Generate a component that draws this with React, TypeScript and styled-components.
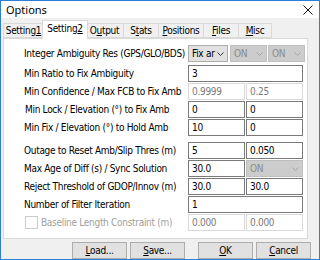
import React from "react";
import styled, { createGlobalStyle } from "styled-components";

const GlobalStyle = createGlobalStyle`
  html, body {
    margin: 0;
    padding: 0;
    background: #ffffff;
  }
  body {
    font-family: "DejaVu Sans Condensed", "Liberation Sans", sans-serif;
    font-size: 10px;
    letter-spacing: -0.3px;
    color: #000000;
  }
`;

const Window = styled.div`
  width: 320px;
  height: 260px;
  box-sizing: border-box;
  border: 1px solid #2b7fd6;
  background: #f0f0f0;
  display: flex;
  flex-direction: column;
  overflow: hidden;
`;

const TitleBar = styled.div`
  height: 19px;
  background: #ffffff;
  display: flex;
  align-items: center;
  justify-content: space-between;
  padding: 0 6px 0 5px;
  font-family: "Noto Sans", "Open Sans", sans-serif;
  font-size: 11px;
  letter-spacing: 0;
`;

const Close = styled.svg`
  width: 10px;
  height: 10px;
`;

const Client = styled.div`
  flex: 1;
  display: flex;
  flex-direction: column;
  padding: 1px 2px 0 2px;
  background: #f0f0f0;
`;

const TabStrip = styled.div`
  display: flex;
  align-items: flex-end;
  height: 19px;
  position: relative;
  z-index: 1;
`;

const Tab = styled.div<{ $active?: boolean; $w: number }>`
  box-sizing: border-box;
  width: ${(p) => p.$w}px;
  height: ${(p) => (p.$active ? 19 : 15)}px;
  margin: 0 ${(p) => (p.$active ? -2 : 0)}px;
  margin-bottom: ${(p) => (p.$active ? -1 : 0)}px;
  border: 1px solid #d9d9d9;
  border-left-width: ${(p) => (p.$active ? 1 : 0)}px;
  border-bottom: ${(p) => (p.$active ? "none" : "1px solid #d9d9d9")};
  background: ${(p) => (p.$active ? "#ffffff" : "#f0f0f0")};
  display: flex;
  align-items: ${(p) => (p.$active ? "flex-start" : "center")};
  padding-top: ${(p) => (p.$active ? 2 : 0)}px;
  justify-content: center;
  white-space: nowrap;
  position: relative;
  z-index: ${(p) => (p.$active ? 2 : 1)};
  &:first-child {
    border-left-width: 1px;
    margin-left: 0;
  }
`;

const Key = styled.span`
  text-decoration: underline;
  text-underline-offset: 1px;
`;

const Panel = styled.div`
  box-sizing: border-box;
  width: 305px;
  height: 201px;
  background: #ffffff;
  border: 1px solid #d9d9d9;
  padding: 6px 0 0 20px;
  display: flex;
  flex-direction: column;
`;

const Section = styled.div<{ $gap?: number }>`
  display: flex;
  flex-direction: column;
  gap: 1px;
  margin-top: ${(p) => p.$gap ?? 0}px;
`;

const Row = styled.div`
  display: flex;
  align-items: center;
  height: 17px;
`;

const Label = styled.div<{ $dim?: boolean; $indent?: number }>`
  width: 164px;
  flex-shrink: 0;
  padding-left: ${(p) => p.$indent ?? 0}px;
  box-sizing: border-box;
  white-space: nowrap;
  color: ${(p) => (p.$dim ? "#a0a0a0" : "#000000")};
  display: flex;
  align-items: center;
  gap: 3px;
`;

const Fields = styled.div`
  display: flex;
  gap: 1px;
  height: 100%;
`;

const Input = styled.div<{ $w: number; $dim?: boolean }>`
  box-sizing: border-box;
  width: ${(p) => p.$w}px;
  height: 100%;
  border: 1px solid ${(p) => (p.$dim ? "#d9d9d9" : "#7a7a7a")};
  background: #ffffff;
  color: ${(p) => (p.$dim ? "#7a7a7a" : "#000000")};
  padding-left: 3px;
  display: flex;
  align-items: center;
  white-space: nowrap;
`;

const Combo = styled.div<{ $w: number; $dim?: boolean }>`
  box-sizing: border-box;
  width: ${(p) => p.$w}px;
  height: 100%;
  border: 1px solid ${(p) => (p.$dim ? "#bfbfbf" : "#adadad")};
  background: ${(p) => (p.$dim ? "#cccccc" : "#e1e1e1")};
  color: ${(p) => (p.$dim ? "#8a8a8a" : "#000000")};
  padding: 0 3px;
  display: flex;
  align-items: center;
  justify-content: space-between;
  white-space: nowrap;
`;

const Chevron = styled.svg<{ $dim?: boolean }>`
  width: 7px;
  height: 4px;
  flex-shrink: 0;
  stroke: ${(p) => (p.$dim ? "#a6a6a6" : "#333333")};
`;

const Check = styled.span`
  display: inline-block;
  box-sizing: border-box;
  width: 13px;
  height: 13px;
  flex-shrink: 0;
  border: 1px solid #cccccc;
  background: #ffffff;
  margin-left: 1px;
`;

const ButtonRow = styled.div`
  display: flex;
  padding: 3px 0 0 69px;
  gap: 3px;
`;

const Button = styled.div<{ $space?: number }>`
  box-sizing: border-box;
  width: 55px;
  height: 17px;
  border: 1px solid #adadad;
  background: #e1e1e1;
  display: flex;
  align-items: center;
  justify-content: center;
  margin-left: ${(p) => p.$space ?? 0}px;
`;

const ChevronIcon = ({ dim }: { dim?: boolean }) => (
  <Chevron $dim={dim} viewBox="0 0 7 4" fill="none">
    <path d="M0.5 0.5 L3.5 3.5 L6.5 0.5" strokeWidth="1" />
  </Chevron>
);

type Field = { kind: "input" | "combo"; value: string; w: number; dim?: boolean };

type RowSpec = { label: string; fields: Field[]; indent?: number };

const full = 115;
const half = 57;

const groupA: RowSpec[] = [
  { label: "Min Ratio to Fix Ambiguity", fields: [{ kind: "input", value: "3", w: full }] },
  {
    label: "Min Confidence / Max FCB to Fix Amb",
    fields: [
      { kind: "input", value: "0.9999", w: half, dim: true },
      { kind: "input", value: "0.25", w: half, dim: true },
    ],
  },
  {
    label: "Min Lock / Elevation (°) to Fix Amb",
    indent: 1,
    fields: [
      { kind: "input", value: "0", w: half },
      { kind: "input", value: "0", w: half },
    ],
  },
  {
    label: "Min Fix / Elevation (°) to Hold Amb",
    fields: [
      { kind: "input", value: "10", w: half },
      { kind: "input", value: "0", w: half },
    ],
  },
];

const groupB: RowSpec[] = [
  {
    label: "Outage to Reset Amb/Slip Thres (m)",
    fields: [
      { kind: "input", value: "5", w: half },
      { kind: "input", value: "0.050", w: half },
    ],
  },
  {
    label: "Max Age of Diff (s) / Sync Solution",
    fields: [
      { kind: "input", value: "30.0", w: half },
      { kind: "combo", value: "ON", w: half, dim: true },
    ],
  },
  {
    label: "Reject Threshold of GDOP/Innov (m)",
    fields: [
      { kind: "input", value: "30.0", w: half },
      { kind: "input", value: "30.0", w: half },
    ],
  },
  { label: "Number of Filter Iteration", fields: [{ kind: "input", value: "1", w: full }] },
];

const renderField = (f: Field, i: number) =>
  f.kind === "input" ? (
    <Input key={i} $w={f.w} $dim={f.dim}>
      {f.value}
    </Input>
  ) : (
    <Combo key={i} $w={f.w} $dim={f.dim}>
      {f.value}
      <ChevronIcon dim={f.dim} />
    </Combo>
  );

const renderRow = (r: RowSpec) => (
  <Row key={r.label}>
    <Label $indent={r.indent}>{r.label}</Label>
    <Fields>{r.fields.map(renderField)}</Fields>
  </Row>
);

const tabs = [
  { pre: "Setting", key: "1", post: "", w: 41 },
  { pre: "Setting", key: "2", post: "", w: 46, active: true },
  { pre: "O", key: "u", post: "tput", w: 38 },
  { pre: "S", key: "t", post: "ats", w: 35 },
  { pre: "", key: "P", post: "ositions", w: 45 },
  { pre: "", key: "F", post: "iles", w: 35 },
  { pre: "", key: "M", post: "isc", w: 33 },
];

const App = () => {
  return (
    <>
      <GlobalStyle />
      <Window>
        <TitleBar>
          <span>Options</span>
          <Close viewBox="0 0 10 10" fill="none" stroke="#111111" strokeWidth="1">
            <path d="M0.5 0.5 L9.5 9.5 M9.5 0.5 L0.5 9.5" />
          </Close>
        </TitleBar>
        <Client>
          <TabStrip>
            {tabs.map((t) => (
              <Tab key={t.pre + t.key} $active={t.active} $w={t.w}>
                <span>
                  {t.pre}
                  <Key>{t.key}</Key>
                  {t.post}
                </span>
              </Tab>
            ))}
          </TabStrip>
          <Panel>
            <Row>
              <Label>Integer Ambiguity Res (GPS/GLO/BDS)</Label>
              <Fields>
                <Combo $w={40}>
                  Fix ar
                  <ChevronIcon />
                </Combo>
                <Combo $w={37} $dim style={{ marginLeft: 1 }}>
                  ON
                  <ChevronIcon dim />
                </Combo>
                <Combo $w={37} $dim>
                  ON
                  <ChevronIcon dim />
                </Combo>
              </Fields>
            </Row>
            <Section $gap={3}>{groupA.map(renderRow)}</Section>
            <Section $gap={6}>
              {groupB.map(renderRow)}
              <Row>
                <Label $dim>
                  <Check />
                  Baseline Length Constraint (m)
                </Label>
                <Fields>
                  <Input $w={half} $dim>
                    0.000
                  </Input>
                  <Input $w={half} $dim>
                    0.000
                  </Input>
                </Fields>
              </Row>
            </Section>
          </Panel>
          <ButtonRow>
            <Button>
              <span>
                <Key>L</Key>oad...
              </span>
            </Button>
            <Button>
              <span>
                <Key>S</Key>ave...
              </span>
            </Button>
            <Button $space={10}>
              <span>
                <Key>O</Key>K
              </span>
            </Button>
            <Button>
              <span>
                <Key>C</Key>ancel
              </span>
            </Button>
          </ButtonRow>
        </Client>
      </Window>
    </>
  );
};

export default App;
